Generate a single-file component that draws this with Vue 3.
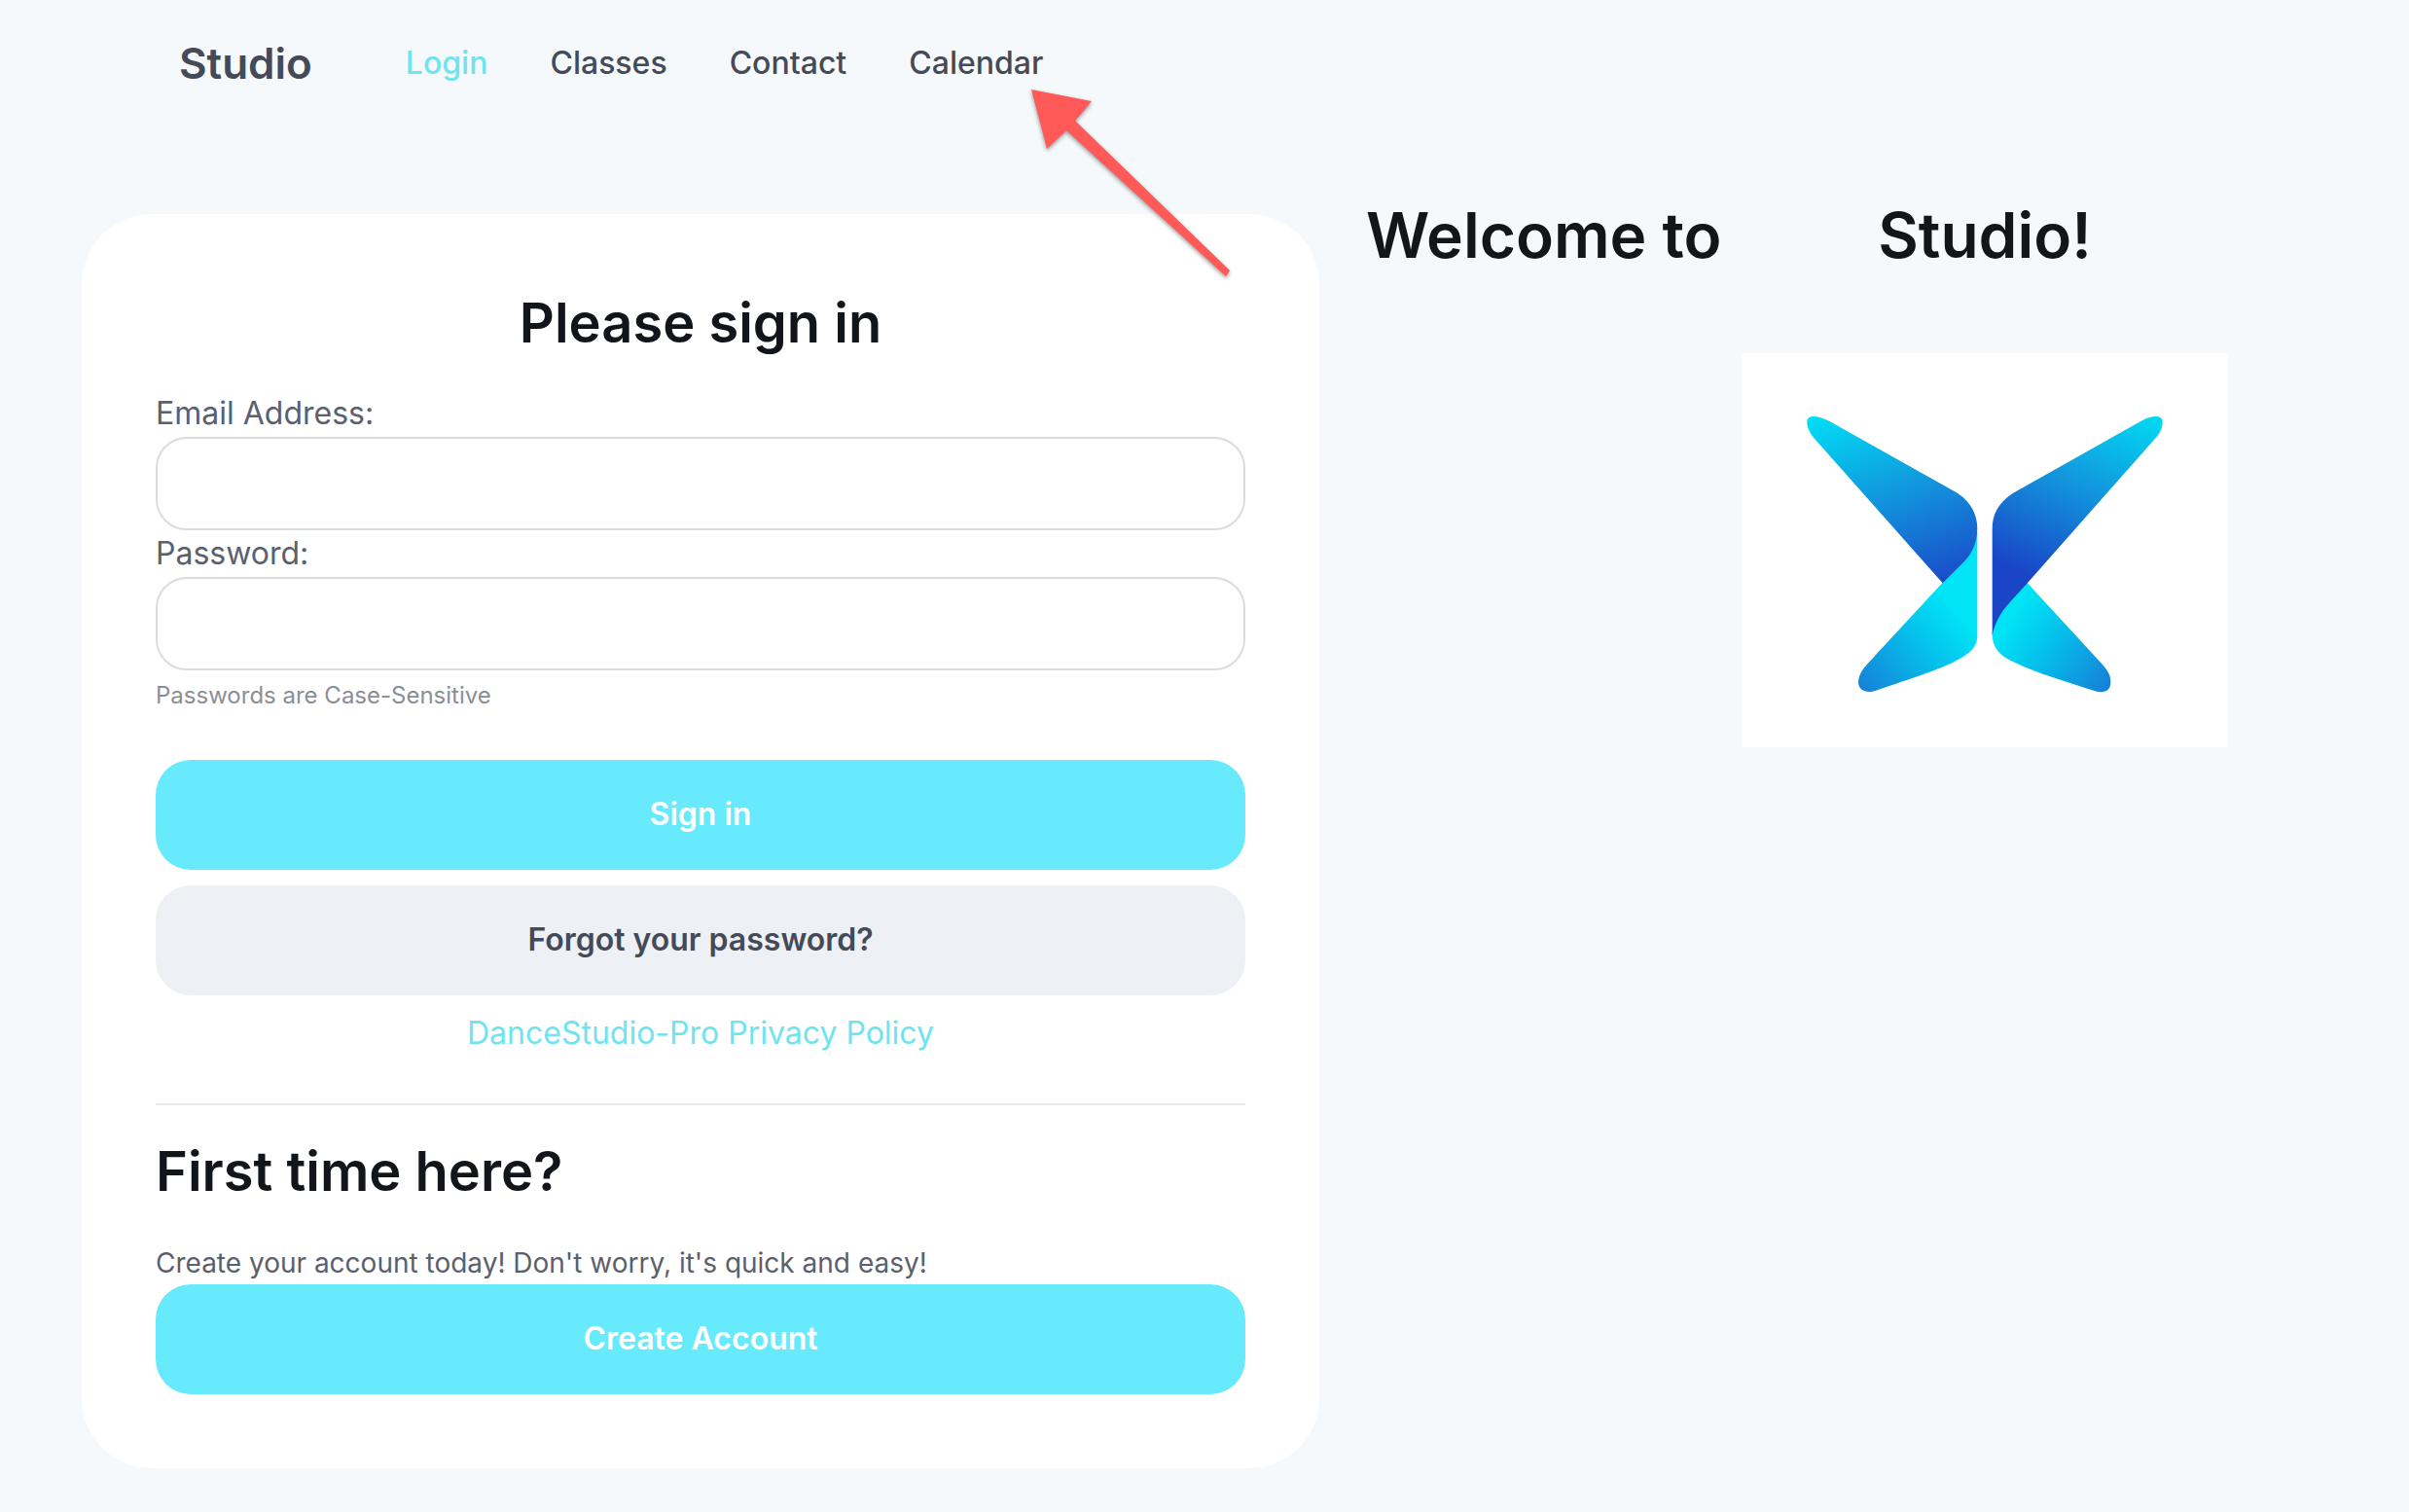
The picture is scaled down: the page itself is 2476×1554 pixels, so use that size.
<script setup>
import { ref } from 'vue'

const links = [
  { label: 'Login', active: true },
  { label: 'Classes', active: false },
  { label: 'Contact', active: false },
  { label: 'Calendar', active: false },
]

const email = ref('')
const password = ref('')
</script>

<template>
  <div class="page">
    <header class="topbar">
      <a class="brand" href="#">Studio</a>
      <nav class="nav">
        <a
          v-for="link in links"
          :key="link.label"
          href="#"
          class="nav-link"
          :class="{ active: link.active }"
        >{{ link.label }}</a>
      </nav>
    </header>

    <main class="content">
      <section class="card">
        <form @submit.prevent>
          <h2 class="title centered">Please sign in</h2>
          <label class="label" for="email">Email Address:</label>
          <input id="email" v-model="email" class="field" type="email" />
          <label class="label" for="password">Password:</label>
          <input id="password" v-model="password" class="field" type="password" />
          <p class="hint">Passwords are Case-Sensitive</p>
          <div class="actions">
            <button class="btn primary" type="submit">Sign in</button>
            <button class="btn secondary" type="button">Forgot your password?</button>
          </div>
          <p class="policy"><a href="#">DanceStudio-Pro Privacy Policy</a></p>
        </form>
        <hr class="rule" />
        <h2 class="title">First time here?</h2>
        <p class="intro">Create your account today! Don't worry, it's quick and easy!</p>
        <button class="btn primary" type="button">Create Account</button>
      </section>

      <aside class="welcome">
        <h1 class="headline">
          <span>Welcome to</span>
          <span class="studio-name">Studio!</span>
        </h1>
        <svg class="logo" viewBox="30 38 1500 1216" role="img" aria-label="Studio logo">
          <defs>
            <linearGradient id="wing-left" gradientUnits="userSpaceOnUse" x1="350" y1="190" x2="570" y2="790">
              <stop offset="0" stop-color="#00dff5" />
              <stop offset="0.5" stop-color="#1295dd" />
              <stop offset="1" stop-color="#1a49c8" />
            </linearGradient>
            <linearGradient id="wing-right" gradientUnits="userSpaceOnUse" x1="1240" y1="180" x2="970" y2="820">
              <stop offset="0" stop-color="#00dff5" />
              <stop offset="0.45" stop-color="#1295dd" />
              <stop offset="0.9" stop-color="#1a45c6" />
            </linearGradient>
            <linearGradient id="tail-left" gradientUnits="userSpaceOnUse" x1="690" y1="830" x2="400" y2="1080">
              <stop offset="0" stop-color="#00e4f6" />
              <stop offset="0.45" stop-color="#06bbea" />
              <stop offset="1" stop-color="#1780d8" />
            </linearGradient>
            <linearGradient id="tail-right" gradientUnits="userSpaceOnUse" x1="860" y1="850" x2="1160" y2="1070">
              <stop offset="0" stop-color="#00e4f6" />
              <stop offset="0.45" stop-color="#06bbea" />
              <stop offset="1" stop-color="#1780d8" />
            </linearGradient>
          </defs>
          <path fill="url(#tail-left)" d="M757 590V905C757 945 738 962 685 990C630 1018 520 1052 445 1078C402 1091 386 1068 391 1044C394 1022 412 1002 428 985L650 745Z" />
          <path fill="url(#wing-left)" d="M232 250C232 226 264 230 300 247L685 463C730 488 757 528 757 580C755 625 742 657 707 690L650 747L258 305C242 286 233 272 232 250Z" />
          <path fill="url(#tail-right)" d="M910 745L1145 1000C1162 1020 1169 1034 1168 1056C1166 1080 1148 1087 1120 1080C1040 1054 940 1024 880 995C825 972 803 948 803 900C815 850 850 805 910 745Z" />
          <path fill="url(#wing-right)" d="M1328 250C1328 226 1292 230 1262 247L878 463C828 492 803 528 803 580V910C808 880 825 840 860 803L910 748L1302 305C1319 286 1328 272 1328 250Z" />
        </svg>
      </aside>
    </main>

    <svg class="arrow" viewBox="0 0 220 210" aria-hidden="true">
      <path d="M10 12L72 24L55 44L214 198L210 204L46 54L26 73Z" />
    </svg>
  </div>
</template>

<style>
body {
  margin: 0;
  background: #f5f9fc;
}
</style>

<style scoped>
.page {
  position: relative;
  box-sizing: border-box;
  min-height: 100vh;
  padding-bottom: 44px;
  background: #f5f9fc;
  color: #5b606d;
  font-family: Inter, "Liberation Sans", sans-serif;
  font-size: 32px;
  line-height: 48px;
}

.topbar {
  display: flex;
  align-items: center;
  height: 130px;
  margin-bottom: 72px;
  padding: 0 184px;
}

.brand {
  margin-right: 96px;
  color: #444a57;
  font-size: 44px;
  font-weight: 600;
  line-height: 64px;
  text-decoration: none;
}

.nav {
  display: flex;
  gap: 64px;
}

.nav-link {
  color: #444a57;
  font-weight: 500;
  text-decoration: none;
}

.nav-link.active {
  color: #70e3f1;
}

.content {
  display: grid;
  grid-template-columns: minmax(0, 1272fr) minmax(0, 988fr);
  column-gap: 48px;
  align-items: start;
  padding: 0 84px;
}

.card {
  margin-top: 18px;
  padding: 76px;
  border-radius: 72px;
  background: #fff;
}

.title {
  margin: 0;
  color: #12151a;
  font-size: 56px;
  font-weight: 600;
  line-height: 72px;
}

.centered {
  margin-bottom: 33px;
  text-align: center;
}

.label {
  display: block;
}

.field {
  display: block;
  box-sizing: border-box;
  width: 100%;
  height: 96px;
  padding: 0 32px;
  border: 2px solid #d9dcdf;
  border-radius: 32px;
  outline: none;
  background: #fff;
  color: #444a57;
  font: inherit;
}

.hint {
  margin: 8px 0 48px;
  color: #8b8e95;
  font-size: 24px;
  line-height: 36px;
}

.actions {
  display: flex;
  flex-direction: column;
  gap: 16px;
}

.btn {
  display: block;
  width: 100%;
  height: 113px;
  padding: 0 32px 2px;
  border: 0;
  border-radius: 36px;
  font: inherit;
  font-weight: 600;
  cursor: pointer;
}

.primary {
  background: #67eafc;
  color: #fff;
}

.secondary {
  background: #edf0f5;
  color: #444a57;
}

.policy {
  margin: 15px 0 48px;
  text-align: center;
}

.policy a {
  color: #70e3f1;
  text-decoration: none;
}

.rule {
  height: 2px;
  margin: 0 0 32px;
  border: 0;
  background: #e8e9eb;
}

.intro {
  margin: 36px 0 0;
  font-size: 28px;
  line-height: 44px;
}

.welcome {
  display: grid;
  grid-template-columns: minmax(0, 1fr) 500px;
  row-gap: 81px;
  padding-right: 102px;
}

.headline {
  display: grid;
  grid-column: 1 / -1;
  grid-template-columns: subgrid;
  margin: 0;
  color: #12151a;
  font-size: 64px;
  font-weight: 600;
  line-height: 80px;
  white-space: nowrap;
}

.studio-name {
  text-align: center;
}

.logo {
  display: block;
  grid-column: 2;
  width: 100%;
  background: #fff;
}

.arrow {
  position: absolute;
  top: 80px;
  left: 1050px;
  width: 220px;
  height: 210px;
  overflow: visible;
  fill: #ff5a58;
  filter: drop-shadow(0 2px 2px rgba(0, 0, 0, 0.4));
  pointer-events: none;
}
</style>
